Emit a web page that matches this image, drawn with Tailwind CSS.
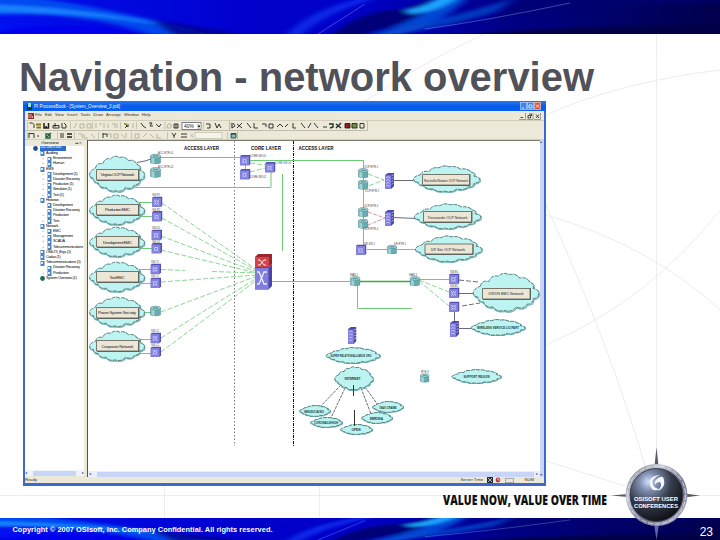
<!DOCTYPE html>
<html lang="en">
<head>
    <meta charset="UTF-8">
    <meta name="viewport" content="width=device-width, initial-scale=1.0">
    <title>Navigation - network overview</title>
    <script src="https://cdn.jsdelivr.net/npm/@tailwindcss/browser@4"></script>
</head>
<body class="bg-white overflow-hidden">
    <!-- Shared shapes -->
    <svg class="absolute" width="0" height="0">
        <symbol id="cloud" viewBox="0 0 100 60" preserveAspectRatio="none">
            <path d="M12 21Q15 11 25 14Q28 4 39 6Q46 -1 54 4Q64 1 70 9Q80 6 85 15Q92 16 90 24Q99 26 98 32Q98 38 90 39Q90 47 81 47Q75 56 65 51Q58 60 47 56Q36 59 31 51Q20 53 17 44Q8 43 9 37Q1 35 2 30Q3 24 12 21Z" transform="translate(1 1.5)" fill="none" stroke="#7db9b9" stroke-width="1.5" vector-effect="non-scaling-stroke"/>
            <path d="M12 21Q15 11 25 14Q28 4 39 6Q46 -1 54 4Q64 1 70 9Q80 6 85 15Q92 16 90 24Q99 26 98 32Q98 38 90 39Q90 47 81 47Q75 56 65 51Q58 60 47 56Q36 59 31 51Q20 53 17 44Q8 43 9 37Q1 35 2 30Q3 24 12 21Z" fill="#bdf3f1" stroke="#41696c" stroke-width="0.8" stroke-dasharray="4 1" vector-effect="non-scaling-stroke"/>
        </symbol>
        <symbol id="switch" viewBox="0 0 11 11">
            <path d="M0 1.5L1.5 0H11V9.5L9.500 11H0Z" fill="#5650b4"/>
            <path d="M0 1.500H9.500V11H0Z" fill="#817fe0"/>
            <circle cx="4.700" cy="6.200" r="1.700" fill="none" stroke="#e4e4ff" stroke-width=".8"/>
            <path d="M2 3.500L3.500 5M7.500 3.500L6 5M2 9L3.500 7.500M7.500 9L6 7.500" stroke="#dcdcff" stroke-width=".7"/>
        </symbol>
        <symbol id="router" viewBox="0 0 11 11">
            <path d="M.5 2.500V9.500Q5.500 11.500 10.500 9.500V2.500Z" fill="#69acb0" stroke="#40797e" stroke-width=".4"/>
            <path d="M1.500 3.500V9.500Q3 10.500 4.500 10.500V4Z" fill="#9fd5d6"/>
            <ellipse cx="5.500" cy="2.500" rx="5" ry="2" fill="#a5d6d6" stroke="#40797e" stroke-width=".5"/>
            <path d="M3 2L8 3M3 3L8 2" stroke="#487e82" stroke-width=".6"/>
        </symbol>
        <symbol id="rack" viewBox="0 0 9 17" preserveAspectRatio="none">
            <path d="M0 2L3 0H9V14L6 17H0Z" fill="#4e48a9"/>
            <path d="M0 2.500H6V17H0Z" fill="#817fe0"/>
            <path d="M1 5L3 4L5 5M1 8L3 7L5 8M1 11L3 10L5 11M1 14L3 13L5 14M6.500 3L8.500 2M6.500 6L8.500 5M6.500 9L8.500 8M6.500 12L8.500 11" fill="none" stroke="#d5d4ff" stroke-width=".8"/>
        </symbol>
        <symbol id="swoosh" viewBox="0 0 720 34" preserveAspectRatio="none">
            <rect width="720" height="34" fill="url(#sky)"/>
            <g filter="url(#soft)">
                <path d="M-20 -8Q90 0 230 40H170Q80 8 -20 16Z" fill="#0758f2" opacity=".8"/>
                <path d="M-20 4Q90 6 200 32Q100 12 -20 12Z" fill="#168bff" opacity=".85"/>
                <path d="M-20 36Q60 14 175 38Z" fill="#0000ec"/>
                <path d="M150 20Q200 26 250 36H175Z" fill="#00008c" opacity=".8"/>
                <path d="M285 36Q310 8 370 -4H385Q330 10 300 36Z" fill="#0828e8"/>
                <path d="M330 36Q365 8 400 10L430 0H450L410 22L350 38Z" fill="#000078"/>
                <path d="M370 36Q420 20 450 -4H470Q440 26 390 38Z" fill="#0758e0" opacity=".8"/>
                <path d="M405 10Q430 6 440 -4H460Q440 12 410 14Z" fill="#1aa6ff"/>
                <path d="M375 33Q445 20 515 -2L495 12Q450 26 400 34Z" fill="#0748c9" opacity=".8"/>
                <path d="M425 38Q550 26 740 24V40H430Z" fill="#000046"/>
                <path d="M490 22Q580 2 740 4V-5H530Z" fill="#000072" opacity=".6"/>
            </g>
            <path d="M318 34L365 4M425 29Q490 20 570 3" fill="none" stroke="#8ba9ff" stroke-width=".7" opacity=".6"/>
        </symbol>
        <defs>
            <linearGradient id="sky">
                <stop offset="0" stop-color="#0010f0"/><stop offset=".35" stop-color="#0000cc"/>
                <stop offset=".5" stop-color="#0000c8"/><stop offset=".7" stop-color="#000088"/><stop offset="1" stop-color="#00004c"/>
            </linearGradient>
            <filter id="soft"><feGaussianBlur stdDeviation="4 1.5"/></filter>
        </defs>
    </svg>

    <div class="relative w-[720px] h-[540px] flex flex-col font-['Liberation_Sans',sans-serif]">
        <!-- Faint guide lines behind the slide -->
        <svg class="absolute inset-0" width="720" height="540" fill="none" stroke="#ededf1">
            <path d="M164.500 486V518M319.500 486V518M656.500 34V518M0 495.500H720"/>
            <path d="M484 34Q420 64 365 101M546 115Q620 82 720 70M546 215Q650 245 720 310M546 205Q612 350 645 466M540 459L625 486M546 345Q650 300 720 210"/>
        </svg>

        <header class="relative h-[34px] shrink-0"><svg class="block w-full h-full"><use href="#swoosh"/></svg></header>

        <main class="relative flex-1 flex flex-col min-h-0">
            <h1 class="h-[67px] shrink-0 pt-[23px] pl-[18px] text-[40px] leading-[40px] font-bold whitespace-nowrap"><svg class="block overflow-visible" width="600" height="44"><text x="1" y="34" textLength="575" lengthAdjust="spacingAndGlyphs" fill="#505159">Navigation - network overview</text></svg></h1>

            <!-- Application window -->
            <section class="ml-[23px] w-[523px] h-[385px] shrink-0 bg-[#ece9d8] border-x-2 border-b-3 border-[#3d68cf] flex flex-col text-[4.5px] leading-none text-black">
                <div class="-mx-0.5 h-[10px] shrink-0 flex items-center bg-linear-to-b from-[#2b78ec] via-[#075be8] to-[#0560f1] px-1 text-white text-[5px]">
                    <svg width="5" height="7"><path d="M0 1H4L5 3V7H0Z" fill="#12363c"/><path d="M1 0H4V4H1Z" fill="#8cf0f0"/></svg>
                    <svg class="ml-0.5 flex-1" height="8"><text x="0" y="6" textLength="86" lengthAdjust="spacingAndGlyphs" fill="#fff" font-size="5">PI ProcessBook - [System_Overview_3.pdi]</text></svg>
                    <svg width="22" height="8" stroke="#fff" fill="none" stroke-width=".8">
                        <rect x=".5" y=".5" width="6" height="7" fill="#4383f0" stroke="#a9c5fa"/><path d="M2 6H4"/>
                        <rect x="7.500" y=".5" width="6" height="7" fill="#4383f0" stroke="#a9c5fa"/><path d="M9 3H12V6H9Z"/>
                        <rect x="14.500" y=".5" width="6" height="7" fill="#d95b39" stroke="#f0b9a9"/><path d="M16 2.500L19 5.500M19 2.500L16 5.500"/>
                    </svg>
                </div>
                <div class="h-[9px] shrink-0 flex items-center gap-[3px] pl-[3px] pr-[3px] text-[#333] text-[4.2px]">
                    <svg width="6" height="6" class="-mr-[2px]"><path d="M0 0H6V6H0Z" fill="#862d28"/><path d="M1 1V5M3 1V5M4.500 3V5" stroke="#e6aaa0"/></svg>
                    <span>File</span><span>Edit</span><span>View</span><span>Insert</span><span>Tools</span><span>Draw</span><span>Arrange</span><span>Window</span><span class="flex-1">Help</span>
                    <svg width="22" height="8" fill="none" stroke="#222" stroke-width=".8"><path d="M0 7.500H6.500V1M7.500 7.500H14V1M15 7.500H21.500V1" stroke="#888"/><path d="M1.500 5.500H4M9 3.500H11.500V6H9ZM10 2H12.500V4M17 2.500L20 6M20 2.500L17 6"/></svg>
                </div>

                <!-- Toolbars -->
                <svg class="block shrink-0" width="519" height="20" viewBox="25 120 519 20" fill="none" stroke="#222" stroke-width=".9">
                    <path d="M25 120.500H544M25 139.500H544" stroke="#d0ccb9"/>
                    <path d="M25 130.500H367.500V121M229.500 121V130M237.500 131V139" stroke="#bcb8a5"/>
                    <path d="M27.500 122V129M27.500 132V139M231 122V129M70.500 122V129M92.500 122V129M120.500 122V129M136.500 122V129M165 122V129M203.500 122V129M57.500 132V139M74.500 132V139M98.500 132V139M131.500 132V139M167.500 132V139M227.500 132V139" stroke="#c3bfab"/>
                    <path d="M29.500 123H32.500L34 124.500V128M53 125.500H59V128H53ZM55 123V127M62 123V128H66V125L64 123"/>
                    <path d="M36 124.500H41M36.500 127.500H41" stroke="#8a7810" stroke-width="2"/>
                    <path d="M44 123V128H48.500V123M45 127H47" stroke-width="1.500"/>
                    <path d="M74 128L77 123M80 124H84V128H80ZM87 124H91V128H87ZM96 123V128M99 124H102M104 123V128M108 124V128M112 124H115V128M117 123V128M133 123V128M168 124H171V128H167Z" stroke="#b3af9e"/>
                    <path d="M124 123L128 127V124M125 128L127 126M141 123L143 126L146 128M149 123H152L150 126H153M156 124L159 127L161 124M174 124H178V128H174ZM176 124V128"/>
                    <path d="M124 124H127" stroke="#93a028" stroke-width="1.500"/>
                    <rect x="182" y="122.500" width="19" height="7" fill="#fff" stroke="#6d7681"/><path d="M197 124H201V129H197Z" fill="#d6d4c8" stroke="none"/><path d="M198 126H200L199 127Z" fill="#222"/>
                    <path d="M206 124H210V128H207M215 123L217 128L219 124L221 128M232 123V128L235 126L233 123M237 128L242 123M237 124L242 128M247 123L251 128M254 123V128H258M262 124H266V127M269 124H273V128H269ZM277 127L280 124L283 127M285 127L288 124M293 123V128H296M301 123L305 128M308 128L311 123M314 123L318 128M323 127H327"/>
                    <path d="M329 124H333V127L330 128M336 124L341 128M341 123L336 128" stroke="#20342a" stroke-width="1.400"/>
                    <path d="M345 123.500H350V128H345Z" fill="#8d1f19"/><path d="M352 123.500H357V128H352Z" fill="#729046"/><path d="M360 123.500H364V128H360Z"/>
                    <path d="M29 133.500H34V138M29 133V138M37 136H39M61 133V138M63 133V138"/>
                    <path d="M46 134H50V138H46ZM47 137L51 133" stroke="#296447" stroke-width="1.500"/><path d="M67 134H72M67 137H72" stroke-width="1.700"/>
                    <path d="M78 134H82V138M84 134V138H88M91 134L95 138M107 134H111V138M114 134H118V138H114ZM121 134L125 138M126 133V138M135 134H139V138H135ZM143 137L147 133M150 134L154 138M157 134V138H161" stroke="#b3af9e"/>
                    <path d="M103 134H107V137M103 133V138M172 133L174 136V138M176 133L174 136M181 134H187M181 137H187"/>
                    <rect x="195" y="132.500" width="27" height="6" fill="#f6f4e9" stroke="#cbc7b6"/><path d="M193 134L191 135.500L193 137" stroke="#aaa"/>
                    <path d="M231 133.500H236V138H231Z" fill="#86bdae" stroke="#254c51"/><path d="M231 134H236" stroke="#143442"/>
                    <text x="184" y="128" font-size="5" fill="#222" stroke="none">40%</text>
                </svg>

                <div class="flex-1 min-h-0 flex">
                    <!-- Tree -->
                    <aside class="w-[59px] shrink-0 flex flex-col bg-white overflow-hidden">
                        <div class="h-[6px] shrink-0 bg-[#ece9d8] flex items-center text-[4.2px]"><span class="flex-1 text-center">Overview</span><span class="mr-0.5 text-[3px]">◂▸✕</span></div>
                        <ul id="tree" class="flex-1"></ul>
                        <div class="h-[6px] shrink-0 flex items-center justify-between bg-[#eef3fe] text-[4px] text-[#3b578f]"><span>◂</span><span class="w-[43px] h-[5px] bg-[#c7d5f7]"></span><span>▸</span></div>
                        <div class="h-px shrink-0 bg-[#ece9d8]"></div>
                    </aside>
                    <div class="w-[4px] shrink-0 bg-[#ece9d8] border-r border-[#55524b]"></div>

                    <!-- Diagram -->
                    <div class="flex-1 flex flex-col border-t border-[#7f7b70]">
                        <div class="flex-1 min-h-0 flex">
                            <svg class="block flex-1 bg-white" viewBox="88 141 452 330" preserveAspectRatio="none" fill="none">
                                <path d="M234.500 141V446" stroke="#777" stroke-dasharray="1.500 2"/>
                                <path d="M293.500 141V446" stroke="#111" stroke-dasharray="3 1 1 1"/>
                                <g stroke="#6fca76">
                                    <path d="M160 157.500H240M250 160.500H363.500V245M135 187.500H271V172M245.500 165V170M282.500 174V251"/>
                                    <path d="M138 202.500H152M138 216.500H152M138 248.500H152M138 269.500H151M138 283.500H151M136 312.500H151M138 339.500H151M138 353.500H151"/>
                                    <path d="M272 281.500H350M357.500 286V308.500H412M367 249.500H387M397 249.500H416M419 279.500H449"/>
                                    <path d="M162 203L257 270M162 218L257 271M161 236L257 272M161 250L257 273M161 269.500L185 270.500M212 271.500L257 273M161 282L257 275M161 312L257 276M161 338L257 278M161 352L257 280M250 163L265 165M250 172L265 168M368 174L384 180L368 186M419 280L449 292M419 281L449 306" stroke-width=".8" stroke-dasharray="5 2"/>
                                </g>
                                <path d="M360 281.500H410" stroke="#36af3d" stroke-width="1.300"/>
                                <path d="M368 212L385 218L368 225" stroke="#d888a3" stroke-width=".9" stroke-dasharray="4 1.500"/>
                                <g stroke="#555b70" stroke-width=".9">
                                    <path d="M137 162.500L145 161L151 159M394 180.500H414M394 217.500L415 218.500M459 293.500H474M454.500 311V322M459 328.500H472"/>
                                    <path d="M459 280L478 282M462 306L480 303" stroke-dasharray="5 2"/>
                                    <path d="M341 385L319 408M345 388L331 418M361 388L371 414M365 387L378 405" stroke-dasharray="3 1"/>
                                </g>

                                <use href="#cloud" x="88.500" y="155" width="57" height="38"/>
                                <use href="#cloud" x="88.500" y="194" width="57" height="32"/>
                                <use href="#cloud" x="88.500" y="226" width="57" height="32"/>
                                <use href="#cloud" x="88.500" y="261" width="57" height="32"/>
                                <use href="#cloud" x="88.500" y="296" width="57" height="32"/>
                                <use href="#cloud" x="88.500" y="330" width="57" height="32"/>
                                <use href="#cloud" x="412" y="165" width="69" height="28"/>
                                <use href="#cloud" x="413" y="203" width="69" height="27"/>
                                <use href="#cloud" x="414" y="235" width="69" height="28"/>
                                <use href="#cloud" x="472" y="272" width="68" height="41"/>
                                <use href="#cloud" x="470" y="319" width="56" height="17"/>
                                <use href="#cloud" x="325" y="347" width="56" height="17"/>
                                <use href="#cloud" x="334" y="366" width="40" height="25"/>
                                <use href="#cloud" x="451" y="369" width="51" height="15"/>
                                <use href="#cloud" x="299" y="405" width="32" height="12"/>
                                <use href="#cloud" x="310" y="417" width="33" height="11"/>
                                <use href="#cloud" x="340" y="424" width="33" height="11"/>
                                <use href="#cloud" x="361" y="412" width="32" height="12"/>
                                <use href="#cloud" x="372" y="401" width="32" height="12"/>
                                <path d="M353.500 385V396M354.500 410V426" stroke="#333"/>

                                <g fill="#ece6d7" stroke="#77776c">
                                    <path d="M96.500 169.500H138.500V180H96.500ZM96.500 204.500H138.500V215H96.500ZM96.500 236.500H138.500V247H96.500ZM96.500 271.500H138.500V282H96.500ZM96.500 307.500H138.500V318H96.500ZM96.500 340.500H138.500V351H96.500Z"/>
                                    <path d="M422.500 174.500H469.500V185H422.500ZM423.500 211.500H471.500V222H423.500ZM425 244H473V254H425ZM482.500 288.500H530V299H482.500Z"/>
                                    <path d="M97 180.500H139V169M97 215.500H139V204M97 247.500H139V236M97 282.500H139V271M97 318.500H139V307M97 351.500H139V340M423 185.500H470V174M424 222.500H472V211M425 254.500H473V244M483 299.500H530.500V288" fill="none" stroke="#4e4e46" stroke-width=".8"/>
                                </g>

                                <use href="#router" x="150" y="153.500" width="11" height="11"/>
                                <use href="#router" x="150" y="167" width="11" height="11"/>
                                <use href="#switch" x="152" y="196.500" width="10.500" height="10.500"/>
                                <use href="#switch" x="152" y="211" width="10.500" height="10.500"/>
                                <use href="#switch" x="151.500" y="229.500" width="10.500" height="10.500"/>
                                <use href="#switch" x="151.500" y="243" width="10.500" height="10.500"/>
                                <use href="#switch" x="150.500" y="263.500" width="10.500" height="10.500"/>
                                <use href="#switch" x="150.500" y="277.500" width="10.500" height="10.500"/>
                                <use href="#router" x="150" y="305.500" width="11" height="11"/>
                                <use href="#switch" x="150.500" y="332.500" width="10.500" height="10.500"/>
                                <use href="#switch" x="150.500" y="346.500" width="10.500" height="10.500"/>
                                <use href="#switch" x="240" y="155" width="10.500" height="10.500"/>
                                <use href="#switch" x="240" y="169" width="10.500" height="10.500"/>
                                <use href="#switch" x="265" y="162" width="10.500" height="10.500"/>
                                <use href="#router" x="358" y="168" width="10.500" height="10.500"/>
                                <use href="#router" x="358" y="179.500" width="10.500" height="10.500"/>
                                <use href="#router" x="358" y="207" width="10.500" height="10.500"/>
                                <use href="#router" x="358" y="218.500" width="10.500" height="10.500"/>
                                <use href="#switch" x="356" y="244.500" width="10.500" height="10.500"/>
                                <use href="#router" x="387" y="244.500" width="10" height="10"/>
                                <use href="#rack" x="385" y="173" width="9" height="16"/>
                                <use href="#rack" x="385" y="210" width="9" height="16"/>
                                <use href="#router" x="350" y="276" width="10.500" height="10.500"/>
                                <use href="#router" x="409.500" y="276" width="10.500" height="10.500"/>
                                <use href="#switch" x="449" y="273.500" width="10.500" height="10.500"/>
                                <use href="#switch" x="449" y="287.500" width="10.500" height="10.500"/>
                                <use href="#switch" x="449" y="301.500" width="10.500" height="10.500"/>
                                <use href="#rack" x="450" y="321" width="9" height="16"/>
                                <use href="#rack" x="348" y="327" width="8.500" height="17"/>
                                <use href="#router" x="420" y="373" width="9.500" height="10"/>

                                <!-- Core chassis -->
                                <path d="M255 257L258 254H272V264L269 267H255Z" fill="#9c262e"/><path d="M255 257H269V267H255Z" fill="#d1454d"/>
                                <path d="M255 267H269L272 264V286L268.500 289.500H255Z" fill="#4c45a9"/><path d="M255 268H268.500V289.500H255Z" fill="#807de0"/>
                                <path d="M258 260H260L264 265H266M258 265H260L264 260H266" stroke="#ffe6e6"/>
                                <path d="M257 272H259L264 284H267M257 284H259L264 272H267" stroke="#f0efff" stroke-width="1.300"/>

                                <g fill="#111" font-size="5" font-weight="bold">
                                    <text x="184" y="149.500" textLength="35" lengthAdjust="spacingAndGlyphs">ACCESS LAYER</text>
                                    <text x="251" y="149.500" textLength="30" lengthAdjust="spacingAndGlyphs">CORE LAYER</text>
                                    <text x="298.500" y="149.500" textLength="35" lengthAdjust="spacingAndGlyphs">ACCESS LAYER</text>
                                </g>
                                <g fill="#222" font-size="4.300" text-anchor="middle">
                                    <text x="117.500" y="176" textLength="34">Virginia OCP Network</text>
                                    <text x="117.500" y="211" textLength="25">Production EMC</text>
                                    <text x="117.500" y="243.500" textLength="29">Development EMC</text>
                                    <text x="117" y="278.500" textLength="15">Test EMC</text>
                                    <text x="117" y="314" textLength="38">Power System Security</text>
                                    <text x="117.500" y="347.500" textLength="32">Corporate Network</text>
                                    <text x="446" y="181.500" textLength="44" lengthAdjust="spacingAndGlyphs">Rockville/Station OCP Network</text>
                                    <text x="447.500" y="218.500" textLength="40" lengthAdjust="spacingAndGlyphs">Tierraverde OCP Network</text>
                                    <text x="448" y="250.500" textLength="34" lengthAdjust="spacingAndGlyphs">DR Site OCP Network</text>
                                    <text x="506" y="295" textLength="35" lengthAdjust="spacingAndGlyphs">DR/VN EMC Network</text>
                                </g>
                                <g fill="#143c42" font-size="3.200" font-weight="bold" text-anchor="middle">
                                    <text x="498" y="329" textLength="42" lengthAdjust="spacingAndGlyphs">WIRELESS SERVICE LIC/PART</text>
                                    <text x="351" y="357" textLength="41" lengthAdjust="spacingAndGlyphs">SUPER RELATION/ALLIANCE ORG</text>
                                    <text x="352.500" y="380" font-size="3.800" textLength="16" lengthAdjust="spacingAndGlyphs">INTERNET</text>
                                    <text x="476.500" y="378" textLength="26" lengthAdjust="spacingAndGlyphs">SUPPORT REGION</text>
                                    <text x="314" y="412.500" textLength="20" lengthAdjust="spacingAndGlyphs">SMUD/CAISO</text>
                                    <text x="326" y="424" textLength="24" lengthAdjust="spacingAndGlyphs">CORONA/LEHIGH</text>
                                    <text x="356" y="430.500" textLength="9">OPEN</text>
                                    <text x="376.500" y="419.500" textLength="13">ENRON A</text>
                                    <text x="388" y="408.500" textLength="17" lengthAdjust="spacingAndGlyphs">ISAX CRAME</text>
                                </g>
                                <g fill="#444" font-size="2.600">
                                    <text x="158" y="154">ACC-RTR-01</text><text x="158" y="168">ACC-RTR-02</text>
                                    <text x="152" y="196">SW-P1</text><text x="152" y="210.500">SW-P2</text>
                                    <text x="152" y="229">SW-D1</text><text x="152" y="242.500">SW-D2</text>
                                    <text x="151" y="263">SW-T1</text><text x="151" y="277">SW-T2</text>
                                    <text x="151" y="332">SW-C1</text><text x="151" y="346">SW-C2</text>
                                    <text x="250" y="157">CORE-SW-01</text><text x="250" y="178">CORE-SW-02</text><text x="275" y="164" fill="#4b61a6">CORE-SW-03</text>
                                    <text x="364" y="168">OCP-RTR-1</text><text x="365" y="192">OCP-RTR-2</text>
                                    <text x="364" y="206.500">OCP-RTR-3</text><text x="364" y="230">OCP-RTR-4</text>
                                    <text x="364" y="245">DR-SW-1</text><text x="394" y="244.500">DR-RTR-1</text>
                                    <text x="350" y="276">WAN-1</text><text x="409" y="276">WAN-2</text>
                                    <text x="450" y="273">SW-E1</text><text x="450" y="287">SW-E2</text><text x="421" y="372.500">RTR-9</text>
                                </g>
                            </svg>
                        </div>
                        <div class="h-[6px] shrink-0 flex items-center justify-between bg-[#e9effd] text-[4px] text-[#3b578f]"><span class="w-[9px] pl-px">◂</span><span class="flex-1 h-[5px] bg-[#c9d5f6]"></span><span class="w-[6px] text-center">▸</span></div>
                    </div>
                    <div class="w-[4px] shrink-0 bg-[#c9d6f8] flex flex-col justify-between text-[4px] text-[#3b578f]"><span>▴</span><span>▾</span></div>
                </div>

                <!-- Status bar -->
                <div class="h-[6px] shrink-0 flex items-center gap-1 text-[4.2px] text-[#333]">
                    <span class="flex-1">Ready</span>
                    <span class="w-[24px] pl-px whitespace-nowrap">Server Time</span>
                    <svg width="14" height="6"><path d="M0 0H6V6H0Z" fill="#1f2c3a"/><path d="M1 1L5 5M5 1L1 5" stroke="#ddd" stroke-width=".8"/><circle cx="11" cy="3" r="2.400" fill="#b93848"/><path d="M10 2H12V4" stroke="#fff" stroke-width=".6" fill="none"/></svg>
                    <span class="w-[9px] h-[5px] border border-[#aaa]"></span>
                    <span class="ml-1.5 mr-2.5">NUM</span>
                </div>
            </section>

            <p class="pl-[442px] pt-[4px]">
                <svg class="block overflow-visible" width="168" height="20"><text x="1" y="14.500" textLength="164" lengthAdjust="spacingAndGlyphs" font-family="'Open Sans',sans-serif" font-size="14" font-weight="800" fill="#111">VALUE NOW, VALUE OVER TIME</text></svg>
            </p>
        </main>

        <footer class="relative h-[22px] shrink-0 flex items-center bg-[#000080] text-white">
            <svg class="absolute inset-0 w-full h-full"><use href="#swoosh"/></svg>
            <svg class="relative flex-1 h-full" height="22"><text x="12.500" y="14" textLength="260" font-size="7.400" font-weight="bold" fill="#fff">Copyright © 2007 OSIsoft, Inc. Company Confidential. All rights reserved.</text></svg>
            <span class="relative mr-[7px] mt-1.5 text-[12px]">23</span>
        </footer>

        <!-- Conference badge over the footer edge -->
        <svg class="absolute left-[606px] top-[445px]" width="100" height="95" viewBox="606 445 100 95">
            <defs>
                <radialGradient id="ball" cx=".35" cy=".25" r=".8"><stop offset="0" stop-color="#d2e0ff"/><stop offset=".22" stop-color="#7d8cae"/><stop offset=".55" stop-color="#343a48"/><stop offset="1" stop-color="#0c0d12"/></radialGradient>
                <linearGradient id="rim" x2="1" y2="1"><stop offset="0" stop-color="#70757e"/><stop offset=".3" stop-color="#c9ced8"/><stop offset=".6" stop-color="#75778f"/><stop offset="1" stop-color="#c0c2d9"/></linearGradient>
            </defs>
            <path d="M656.500 447L658.500 466H654.500ZM611 495.500L628 494V497ZM700 495.500L684 493.500V497.500Z" fill="#555b67"/>
            <path d="M656.500 540L654 524H659Z" fill="#6067a0"/>
            <circle cx="656.500" cy="495" r="31" fill="url(#rim)"/>
            <circle cx="656.500" cy="495" r="29" fill="none" stroke="#e0e3ea" stroke-width=".8" stroke-dasharray="5 2"/>
            <circle cx="656.500" cy="495" r="26.500" fill="url(#ball)" stroke="#3a3e48"/>
            <path d="M650 485Q648 476 660 475Q650 479 653 485Q655 489 660 489Q652 493 650 485ZM657 479Q663 474 664 480Q666 487 658 491Q663 485 660 482Q656 482 655 485Q654 481 657 479Z" fill="#f6f8ff"/>
            <g fill="#fff" font-size="5.600" font-weight="bold" text-anchor="middle">
                <text x="656" y="500.500" textLength="44" lengthAdjust="spacingAndGlyphs">OSISOFT USER</text>
                <text x="656" y="508" textLength="44" lengthAdjust="spacingAndGlyphs">CONFERENCES</text>
            </g>
        </svg>
    </div>

    <script>
        // level, label, expander
        const nodes = [
            [0, '132.168.9.100', '-'], [1, 'Auditing', '-'], [2, 'Environment', '+'], [2, 'Human', '+'],
            [1, 'EMS', '-'], [2, 'Development (1)', '+'], [2, 'Disaster Recovery', '+'], [2, 'Production (1)', '+'], [2, 'Simulator (1)', '+'], [2, 'Test (1)', '+'],
            [1, 'Historian', '-'], [2, 'Development', ''], [2, 'Disaster Recovery', ''], [2, 'Production', '+'], [2, 'Test', '+'],
            [1, 'Network', '-'], [2, 'EMC', '+'], [2, 'Management', '+'], [2, 'SCADA', '+'], [2, 'Telecommunications', '+'],
            [1, 'OMaT3_Ergs (1)', ''], [1, 'Codas (1)', ''], [1, 'Telecommunications (1)', '-'], [2, 'Disaster Recovery', ''], [2, 'Production', '+'],
            [1, 'System Overview (1)', '']
        ];
        const indent = ['pl-[1px]', 'pl-[8px]', 'pl-[15px]'];
        const tree = document.getElementById('tree');
        nodes.forEach(([level, label, sign], i) => {
            const li = document.createElement('li');
            li.className = 'h-[5.21px] flex items-center whitespace-nowrap text-[3.8px] leading-none ' + indent[level];
            const round = i === 0 || i === nodes.length - 1;
            li.innerHTML =
                `<span class="w-[6px] mr-px shrink-0 text-[#777] text-center">${sign}</span>` +
                (round
                    ? `<svg class="shrink-0" width="5" height="5"><circle cx="2.500" cy="2.500" r="2.400" fill="${i ? '#1c6e50' : '#1d4e91'}"/></svg>`
                    : '<svg class="shrink-0" width="5" height="5"><path d="M.5 0H4.500V5H.5Z" fill="#4f83bd"/><path d="M1 1H3V3H1Z" fill="#d9efff"/></svg>') +
                `<span class="shrink-0 tracking-[-0.25px] ${i ? 'ml-px' : 'ml-0.5 bg-[#316ac5] text-white w-[26px] h-[5px]'}">${label}</span>`;
            tree.appendChild(li);
        });
    </script>
</body>
</html>
